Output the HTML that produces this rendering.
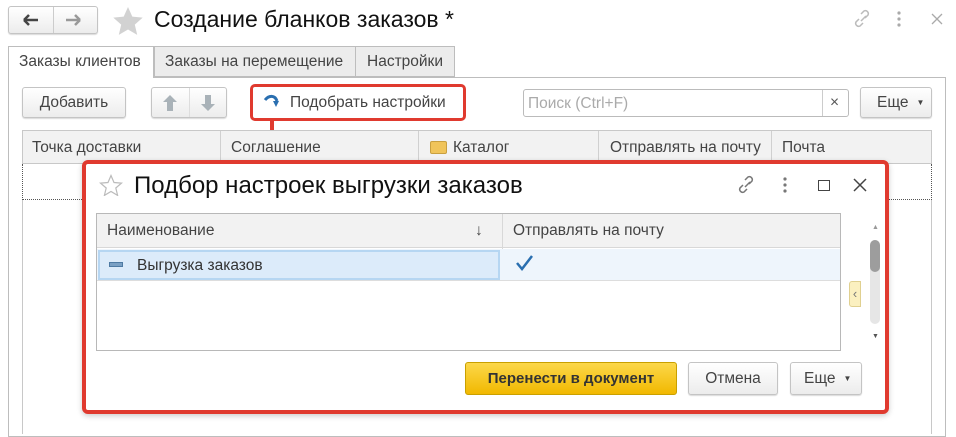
<!DOCTYPE html>
<html><head><meta charset="utf-8"><style>
*{box-sizing:border-box;margin:0;padding:0}
body{width:956px;height:434px;background:#fff;font-family:"Liberation Sans","Noto Sans CJK SC",sans-serif;position:relative;overflow:hidden;color:#333}
.a{position:absolute}
.btn{position:absolute;border:1px solid #c4c4c4;border-radius:3px;background:linear-gradient(#fff,#ececec);box-shadow:0 1px 1px rgba(0,0,0,.15);font-size:15.5px;color:#444;display:flex;align-items:center;justify-content:center}
.t{font-size:15.5px;color:#444;white-space:nowrap}
</style></head><body>
<!-- nav -->
<div class="btn" style="left:8px;top:6px;width:90px;height:28px"></div>
<div class="a" style="left:53px;top:7px;width:1px;height:26px;background:#ccc"></div>
<svg class="a" style="left:21px;top:13px" width="80" height="14"><path d="M3 7h14M3 7l5-5M3 7l5 5" stroke="#444" stroke-width="2.5" fill="none"/><path d="M45 7h14M59 7l-5-5M59 7l-5 5" stroke="#999" stroke-width="2.5" fill="none"/></svg>
<svg class="a" style="left:112px;top:6px" width="32" height="30"><path d="M16 1l4.3 9.6 10.4 1-7.9 7 2.4 10.3L16 23.5 6.8 28.9l2.4-10.3-7.9-7 10.4-1z" fill="#d2d2d2"/></svg>
<div class="a" style="left:154px;top:6px;font-size:23px;color:#111">Создание бланков заказов *</div>
<svg class="a" style="left:852px;top:9px" width="22" height="20"><path d="M9 12l5-5M7 10l-3 3a3 3 0 0 0 4 4l3-3M13 9l3-3a3 3 0 0 0-4-4l-3 3" stroke="#bbb" stroke-width="1.5" fill="none"/></svg>
<svg class="a" style="left:896px;top:10px" width="6" height="18"><circle cx="3" cy="3" r="1.6" fill="#aaa"/><circle cx="3" cy="9" r="1.6" fill="#aaa"/><circle cx="3" cy="15" r="1.6" fill="#aaa"/></svg>
<svg class="a" style="left:931px;top:13px" width="12" height="12"><path d="M1 1l10 10M11 1L1 11" stroke="#aaa" stroke-width="1.3"/></svg>
<!-- tabs -->
<div class="a" style="left:8px;top:77px;width:938px;height:360px;border:1px solid #bdbdbd"></div>
<div class="a" style="left:8px;top:46px;width:146px;height:32px;border:1px solid #bdbdbd;border-bottom:none;background:#fff"></div>
<div class="a t" style="left:19px;top:53px">Заказы клиентов</div>
<div class="a" style="left:154px;top:46px;width:202px;height:31px;border:1px solid #bdbdbd;background:#ececec"></div>
<div class="a t" style="left:165px;top:53px">Заказы на перемещение</div>
<div class="a" style="left:355px;top:46px;width:100px;height:31px;border:1px solid #bdbdbd;background:#ececec"></div>
<div class="a t" style="left:367px;top:53px">Настройки</div>
<!-- toolbar -->
<div class="btn" style="left:22px;top:87px;width:104px;height:31px">Добавить</div>
<div class="btn" style="left:151px;top:87px;width:76px;height:31px"></div>
<div class="a" style="left:189px;top:88px;width:1px;height:29px;background:#ddd"></div>
<svg class="a" style="left:161px;top:94px" width="60" height="18"><path d="M9 1l7 7h-4v9H6V8H2z" fill="#a9b2b8"/><path d="M47 17l7-7h-4V1h-6v9h-4z" fill="#a9b2b8"/></svg>
<div class="a" style="left:250px;top:84px;width:216px;height:37px;border:3px solid #e03a2f;border-radius:5px;background:#fff"></div>
<svg class="a" style="left:263px;top:94px" width="18" height="16"><path d="M2 6c4-5 10-5 12 1" stroke="#2a6fb0" stroke-width="3" fill="none"/><path d="M10 7l6 0-3 6z" fill="#2a6fb0"/></svg>
<div class="a t" style="left:290px;top:94px">Подобрать настройки</div>
<div class="a" style="left:270px;top:121px;width:4px;height:32px;background:#e03a2f"></div>
<svg class="a" style="left:262px;top:148px" width="20" height="16"><path d="M0 0h20L10 16z" fill="#e03a2f"/></svg>
<div class="a" style="left:523px;top:89px;width:326px;height:28px;border:1px solid #bbb;border-radius:3px"></div>
<div class="a" style="left:822px;top:90px;width:1px;height:26px;background:#ccc"></div>
<div class="a t" style="left:528px;top:95px;color:#aaa">Поиск (Ctrl+F)</div>
<div class="a t" style="left:830px;top:94px;color:#555">×</div>
<div class="btn" style="left:860px;top:87px;width:72px;height:31px;justify-content:flex-start;padding-left:16px">Еще <span style="font-size:8px;margin-left:8px">▼</span></div>
<!-- main table -->
<div class="a" style="left:22px;top:130px;width:910px;height:34px;border:1px solid #c8c8c8;background:#f2f2f2"></div>
<div class="a" style="left:220px;top:131px;width:1px;height:32px;background:#d0d0d0"></div>
<div class="a" style="left:418px;top:131px;width:1px;height:32px;background:#d0d0d0"></div>
<div class="a" style="left:598px;top:131px;width:1px;height:32px;background:#d0d0d0"></div>
<div class="a" style="left:771px;top:131px;width:1px;height:32px;background:#d0d0d0"></div>
<div class="a t" style="left:32px;top:139px">Точка доставки</div>
<div class="a t" style="left:231px;top:139px">Соглашение</div>
<div class="a" style="left:430px;top:141px;width:17px;height:13px;background:#f0c45a;border:1px solid #c9a040;border-radius:2px"></div>
<div class="a t" style="left:453px;top:139px">Каталог</div>
<div class="a t" style="left:610px;top:139px">Отправлять на почту</div>
<div class="a t" style="left:782px;top:139px">Почта</div>
<div class="a" style="left:22px;top:164px;width:910px;height:36px;border:1px dotted #555;border-top:none"></div>
<div class="a" style="left:22px;top:200px;width:910px;height:234px;border-left:1px solid #c8c8c8;border-right:1px solid #c8c8c8"></div>
<!-- dialog -->
<div class="a" style="left:82px;top:160px;width:807px;height:254px;border:4px solid #e03a2f;border-radius:6px;background:#fff;box-shadow:0 2px 6px rgba(0,0,0,.2)"></div>
<svg class="a" style="left:99px;top:174px" width="24" height="22"><path d="M12 1.5l3 7 7.5.6-5.7 4.9 1.8 7.4L12 17.5l-6.6 3.9 1.8-7.4L1.5 9.1 9 8.5z" fill="none" stroke="#bbb" stroke-width="1.2"/></svg>
<div class="a" style="left:134px;top:172px;font-size:24px;color:#111">Подбор настроек выгрузки заказов</div>
<svg class="a" style="left:736px;top:174px" width="22" height="22"><path d="M9 13l5-5M7 11l-3 3a3 3 0 0 0 4 4l3-3M13 10l3-3a3 3 0 0 0-4-4l-3 3" stroke="#777" stroke-width="1.5" fill="none"/></svg>
<svg class="a" style="left:782px;top:176px" width="6" height="18"><circle cx="3" cy="3" r="1.6" fill="#777"/><circle cx="3" cy="9" r="1.6" fill="#777"/><circle cx="3" cy="15" r="1.6" fill="#777"/></svg>
<div class="a" style="left:818px;top:180px;width:12px;height:11px;border:1.5px solid #444"></div>
<svg class="a" style="left:853px;top:178px" width="14" height="14"><path d="M1 1l12 12M13 1L1 13" stroke="#444" stroke-width="1.5"/></svg>
<div class="a" style="left:96px;top:213px;width:745px;height:138px;border:1px solid #b8b8b8"></div>
<div class="a" style="left:97px;top:214px;width:743px;height:34px;background:#f2f2f2;border-bottom:1px solid #d8d8d8"></div>
<div class="a" style="left:502px;top:214px;width:1px;height:66px;background:#d8d8d8"></div>
<div class="a t" style="left:107px;top:222px">Наименование</div>
<div class="a t" style="left:475px;top:222px">↓</div>
<div class="a t" style="left:513px;top:222px">Отправлять на почту</div>
<div class="a" style="left:97px;top:249px;width:743px;height:32px;background:#eef5fc;border-bottom:1px solid #ddd"></div>
<div class="a" style="left:98px;top:250px;width:402px;height:30px;background:#dcebfa;border:2px solid #b6d6f2"></div>
<div class="a" style="left:109px;top:262px;width:14px;height:5px;background:#7aa0c4;border:1px solid #4e7aa3"></div>
<div class="a t" style="left:137px;top:257px;color:#333">Выгрузка заказов</div>
<svg class="a" style="left:515px;top:254px" width="20" height="18"><path d="M2 9l5 6L17 2" stroke="#2a6fb0" stroke-width="2.5" fill="none"/></svg>
<div class="a" style="left:872px;top:224px;font-size:7px;color:#999">▲</div>
<div class="a" style="left:870px;top:240px;width:10px;height:84px;background:#e6e6e6;border-radius:5px"></div>
<div class="a" style="left:870px;top:240px;width:10px;height:32px;background:#9d9d9d;border-radius:5px"></div>
<div class="a" style="left:872px;top:333px;font-size:7px;color:#555">▼</div>
<div class="a" style="left:849px;top:281px;width:12px;height:26px;background:#fbf0c0;border:1px solid #e0d090;border-radius:3px 0 0 3px;font-size:13px;color:#777;line-height:24px;text-align:center">‹</div>
<div class="a" style="left:465px;top:362px;width:212px;height:33px;border:1px solid #c9a000;border-radius:3px;background:linear-gradient(#fcd84a,#f1b800);font-size:15px;font-weight:bold;color:#333;display:flex;align-items:center;justify-content:center">Перенести в документ</div>
<div class="btn" style="left:688px;top:362px;width:90px;height:33px">Отмена</div>
<div class="btn" style="left:790px;top:362px;width:72px;height:33px;justify-content:flex-start;padding-left:13px">Еще <span style="font-size:8px;margin-left:8px">▼</span></div>
</body></html>
